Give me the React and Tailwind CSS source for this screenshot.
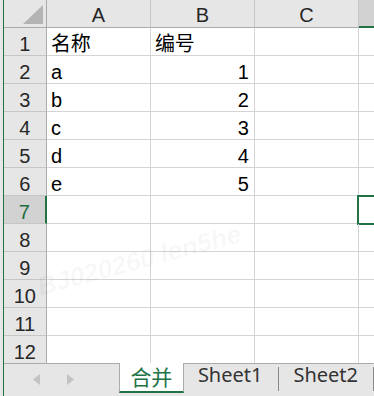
const COLS = ['A', 'B', 'C', '']

const ROWS = [
  ['名称', '编号'],
  ['a', 1],
  ['b', 2],
  ['c', 3],
  ['d', 4],
  ['e', 5],
  [], [], [], [], [], [],
]

const FONT = "font-['Liberation_Sans','Noto_Sans_CJK_SC',sans-serif]"

function Corner() {
  return (
    <div className="h-[28px] bg-[#e6e6e6] border-r border-b border-r-[#ababab] border-b-[#ababab]">
      <svg width="42" height="27" className="block">
        <polygon points="39,5 39,24 19,24" fill="#b4b4b4" />
      </svg>
    </div>
  )
}

function ColHeader({ label, selected }) {
  return (
    <div
      className={`h-[28px] flex items-end justify-center pb-[2px] leading-none text-[20px] text-[#262626] ${FONT} ${
        selected
          ? 'bg-[#d2d2d2] border-b-2 border-b-[#217346]'
          : 'bg-[#e6e6e6] border-r border-b border-r-[#c6c6c6] border-b-[#ababab]'
      }`}
    >
      {label}
    </div>
  )
}

function RowHeader({ n, selected, last }) {
  return (
    <div
      className={`flex items-end justify-center pb-[1px] leading-none text-[20px] ${FONT} ${
        selected
          ? 'bg-[#d2d2d2] border-r-2 border-r-[#217346] text-[#1e6e42]'
          : 'bg-[#e6e6e6] border-r border-r-[#ababab] text-[#262626]'
      } ${last ? 'h-[27px]' : 'h-[28px] border-b border-b-[#c6c6c6]'}`}
    >
      {n}
    </div>
  )
}

function Cell({ value, last, edge, selected }) {
  const isNum = typeof value === 'number'
  return (
    <div
      className={`relative flex items-end pb-[1px] leading-none text-[20px] text-black ${FONT} ${
        isNum ? 'justify-end pr-[5px]' : 'justify-start pl-[4px]'
      } ${edge ? '' : 'border-r border-r-[#d4d4d4]'} ${last ? 'h-[27px]' : 'h-[28px] border-b border-b-[#d4d4d4]'}`}
    >
      {value}
      {selected && (
        <div className="absolute -top-px -left-[2px] w-[40px] h-[30px] border-2 border-[#217346]" />
      )}
    </div>
  )
}

function Arrow({ dir }) {
  return (
    <svg width="7" height="11" className="block">
      {dir === 'left' ? (
        <polygon points="7,0 7,11 0,5.5" fill="#c3c3c3" />
      ) : (
        <polygon points="0,0 0,11 7,5.5" fill="#c3c3c3" />
      )}
    </svg>
  )
}

function TabBar() {
  return (
    <div className="flex h-[33px] bg-[#e6e6e6]">
      <div className="w-[115px] border-t border-t-[#ababab] flex items-start pt-[10px] pl-[29px] gap-[27px]">
        <Arrow dir="left" />
        <Arrow dir="right" />
      </div>
      <div className="w-[65px] h-[30px] pb-[2px] bg-white border-x border-x-[#ababab] border-b-2 border-b-[#217346] flex items-center justify-center text-[21px] leading-none text-[#217346] font-['Noto_Sans_CJK_SC',sans-serif]">
        合并
      </div>
      <div className="flex-1 border-t border-t-[#ababab] flex items-start text-[20px] leading-none text-[#333] font-['Noto_Sans',sans-serif]">
        <span className="pl-[14px] pr-[16px] pt-[1px]">Sheet1</span>
        <span className="w-px h-[24px] mt-[3px] bg-[#8a8a8a]" />
        <span className="pl-[14px] pr-[15px] pt-[1px]">Sheet2</span>
        <span className="w-px h-[24px] mt-[3px] bg-[#8a8a8a]" />
      </div>
    </div>
  )
}

export default function App() {
  return (
    <div className="relative w-[374px] h-[396px] overflow-hidden bg-white flex">
      <div className="w-[3px] bg-[#e6e6e6]" />
      <div className="w-px bg-[#217346]" />
      <div className="flex-1 flex flex-col">
        <div className="grid grid-cols-[43px_104px_104px_104px_1fr]">
          <Corner />
          {COLS.map((c, i) => (
            <ColHeader key={i} label={c} selected={i === 3} />
          ))}
          {ROWS.map((row, r) => {
            const last = r === ROWS.length - 1
            return [
              <RowHeader key={`h${r}`} n={r + 1} selected={r === 6} last={last} />,
              ...COLS.map((_, c) => (
                <Cell
                  key={`${r}-${c}`}
                  value={row[c]}
                  last={last}
                  edge={c === 3}
                  selected={r === 6 && c === 3}
                />
              )),
            ]
          })}
        </div>
        <TabBar />
      </div>

      {/* faint watermark */}
      <div className="pointer-events-none absolute left-[38px] top-[268px] -rotate-[15deg] origin-left text-[26px] font-bold italic whitespace-nowrap text-black/[0.04] font-['Liberation_Sans',sans-serif]">
        BJ020260 len5he
      </div>
    </div>
  )
}
